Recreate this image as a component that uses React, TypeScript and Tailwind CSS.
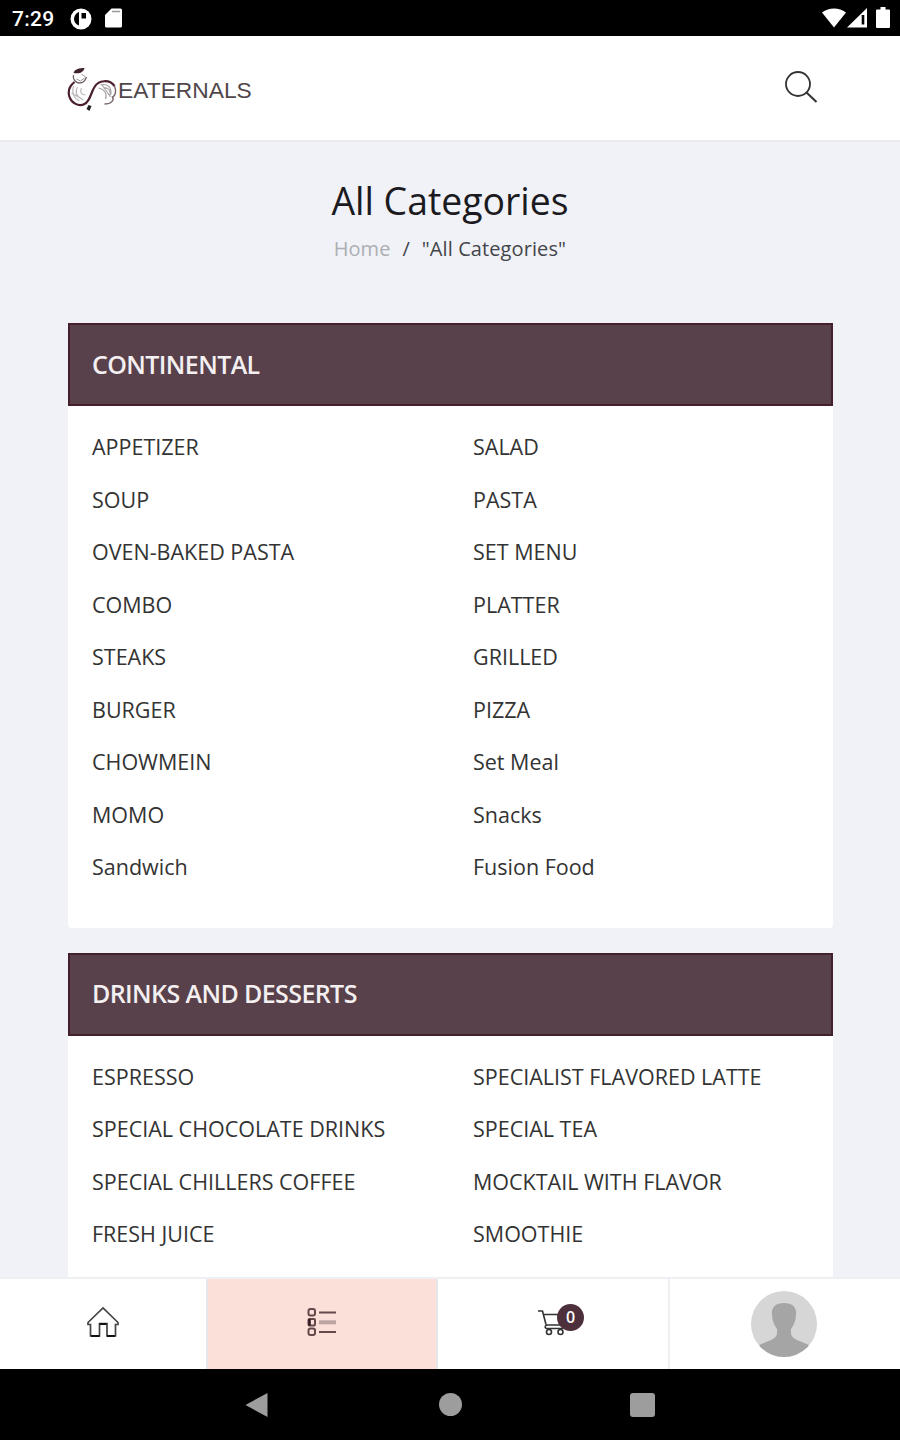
const categories = [
    {
        title: "CONTINENTAL",
        items: [
            "APPETIZER", "SALAD",
            "SOUP", "PASTA",
            "OVEN-BAKED PASTA", "SET MENU",
            "COMBO", "PLATTER",
            "STEAKS", "GRILLED",
            "BURGER", "PIZZA",
            "CHOWMEIN", "Set Meal",
            "MOMO", "Snacks",
            "Sandwich", "Fusion Food",
        ],
    },
    {
        title: "DRINKS AND DESSERTS",
        items: [
            "ESPRESSO", "SPECIALIST FLAVORED LATTE",
            "SPECIAL CHOCOLATE DRINKS", "SPECIAL TEA",
            "SPECIAL CHILLERS COFFEE", "MOCKTAIL WITH FLAVOR",
            "FRESH JUICE", "SMOOTHIE",
        ],
    },
];

function StatusBar() {
    return (
        <div className="flex h-9 shrink-0 items-center justify-between bg-black pl-3 pr-[10px] text-white">
            <div className="flex items-center">
                <span className="w-[58px] pt-[3px] font-['Roboto'] text-[21px] font-medium leading-none tracking-[0.3px]">
                    7:29
                </span>
                <svg className="mt-px h-[22px] w-[22px]" viewBox="0 0 22 22">
                    <circle cx="11" cy="11" r="10.5" fill="#fff" />
                    <path d="M9 4v13.500c-3-1-5-3.500-5-6.500S6 5 9 4Z" fill="#000" />
                    <path d="M11.500 5h4.500v5.500h-4.500Z" fill="#000" />
                </svg>
                <svg className="ml-[13px] h-5 w-[17px]" viewBox="0 0 17 20">
                    <path d="M6.500.5H15.500a1.500 1.500 0 0 1 1.500 1.500V18a1.500 1.500 0 0 1-1.500 1.500H1.500A1.500 1.500 0 0 1 0 18V7Z" fill="#fff" />
                    <path d="M7 3.500h8" stroke="#999" strokeWidth="1.500" />
                </svg>
            </div>
            <div className="flex items-center">
                <svg className="h-5 w-6" viewBox="0 0 24 20">
                    <path d="M0 4.500C7-.8 17-.8 24 4.500L12 19.500Z" fill="#fff" />
                </svg>
                <svg className="ml-px h-5 w-5" viewBox="0 0 20 20">
                    <path d="M20 0V19.500H0Z" fill="#fff" />
                    <path d="M16 7v9.500" stroke="#000" strokeWidth="2.600" />
                </svg>
                <svg className="ml-[9px] h-[22px] w-[14px]" viewBox="0 0 14 22">
                    <path d="M4.500 0h5v2.500H13a1 1 0 0 1 1 1V20a1 1 0 0 1-1 1H1a1 1 0 0 1-1-1V3.500a1 1 0 0 1 1-1h3.500Z" fill="#fff" />
                </svg>
            </div>
        </div>
    );
}

function Header() {
    return (
        <header className="flex h-[106px] shrink-0 items-center justify-between border-b-2 border-[#e9eaee] bg-white pl-[67px] pr-[82px]">
            <div className="flex items-center pt-[3px]">
                <svg className="h-[46px] w-[51px]" viewBox="0 0 50 46" fill="none">
                    <path d="M7 15C2 19 0 24 2 30c2 6 9 10 15 7 6-3 6-11 10-17 4-7 15-8 20-1" stroke="#4a1f30" strokeWidth="2.200" />
                    <path d="M6 6c1-4 6-5 11-5-1 4-4 6-11 5Z" fill="#40232c" />
                    <path d="M6 8c-1 4 2 8 6 8 4 0 6-3 7-6" stroke="#6f6267" strokeWidth="1.300" />
                    <path d="M9 12l4 2 4-3M14 7l4 3" stroke="#9b9497" />
                    <path d="M6 19c-2 7 0 12 6 15M10 20c-3 5-1 9 4 12M14 21c-2 4 0 7 4 7M4 26l12 7" stroke="#bdb9bb" strokeWidth="1.200" />
                    <path d="M33 18c7-2 12 3 10 10M36 21c5-1 8 3 6 8M31 21c6 1 9 6 7 11M34 17l9 13" stroke="#aaa4a7" strokeWidth="1.200" />
                    <path d="M47 19c2 5 1 10-2 11 2 3-1 7-8 7" stroke="#79656d" strokeWidth="1.400" />
                    <path d="M21 38l3 1-2 5-3-2Z" fill="#222" />
                </svg>
                <span className="origin-left scale-x-[1.060] pt-1 font-['Liberation_Sans'] text-[21.500px] leading-none text-[#51474b]">
                    EATERNALS
                </span>
            </div>
            <svg className="mt-[-3px] h-[34px] w-[34px]" viewBox="0 0 34 34" fill="none" stroke="#333" strokeWidth="1.800">
                <circle cx="14" cy="14" r="12" />
                <path d="M22.500 22.500l10 9.500" strokeWidth="2.100" />
            </svg>
        </header>
    );
}

function CategoryCard({ title, items }: { title: string; items: string[] }) {
    return (
        <section className="mb-[25px] rounded-b bg-white pb-[34px]">
            <h2 className="flex h-[83px] items-center border-2 border-[#43202c] bg-[#58414a] px-[22.500px] text-[25px] font-semibold tracking-[-0.600px] text-[#f4eff1]">
                {title}
            </h2>
            <ul className="grid grid-cols-[381px_1fr] pl-[24.500px] pt-[15px] text-[21.500px]">
                {items.map((item) => (
                    <li
                        key={item}
                        className="flex h-[52.500px] items-center whitespace-nowrap text-[#333]"
                    >
                        {item}
                    </li>
                ))}
            </ul>
        </section>
    );
}

function BottomNav() {
    return (
        <nav className="flex h-[92px] shrink-0 border-t-2 border-[#eef0f3] bg-white">
            <a className="flex w-[206px] items-center justify-center pb-1">
                <svg className="h-8 w-8" viewBox="0 0 32 32" fill="none" stroke="#444" strokeWidth="1.700">
                    <path d="M1 16.500 16 2l15 14.500v2h-2.500V30H20V17.500h-7.500V30H3.500V18.500H1Z" />
                    <path d="M12.500 18h7M4 30h8.500M20 30h8" stroke="#111" strokeWidth="2" />
                </svg>
            </a>
            <a className="flex w-[232px] items-center justify-center border-x-2 border-[#e5e7eb] bg-[#fbe0da] pb-[4px]">
                <svg className="h-[30px] w-[30px]" viewBox="0 0 30 30" fill="none" stroke="#63494b" strokeWidth="2">
                    <rect x="1.500" y="2" width="6.500" height="6.500" rx="2" />
                    <rect x="1.500" y="12" width="6.500" height="6.500" rx="1" />
                    <rect x="1.500" y="21.500" width="6.500" height="6.500" rx="2" />
                    <path d="M12 5.500h17M12 25h17" />
                    <path d="M12 15.300h17" stroke="#bca4a2" strokeWidth="4" />
                    <path d="M2.500 12v6.500" stroke="#30191f" strokeWidth="2.500" />
                </svg>
            </a>
            <a className="flex w-[230px] items-center justify-center pb-[3px]">
                <span className="relative h-[30px] w-[30px]">
                    <svg className="h-[30px] w-[30px]" viewBox="0 0 30 30" fill="none" stroke="#333" strokeWidth="1.600">
                        <path d="M0 3h4.500L8 16.500M6 6.500h22l-3 10.500H9c-3 1-2 3.500 0 3.500h16" />
                        <circle cx="11" cy="24" r="2.500" />
                        <circle cx="22.500" cy="24" r="2.500" />
                    </svg>
                    <span className="absolute -top-[4px] left-[19px] flex h-[27px] w-[27px] items-center justify-center rounded-full bg-[#4e303c] text-[16px] font-semibold leading-none text-white">
                        0
                    </span>
                </span>
            </a>
            <a className="flex flex-1 items-center justify-center border-l-2 border-[#eef0f3] pr-[2px]">
                <svg className="h-[66px] w-[66px]" viewBox="0 0 66 66">
                    <defs>
                        <clipPath id="avatar">
                            <circle cx="33" cy="33" r="33" />
                        </clipPath>
                    </defs>
                    <g clipPath="url(#avatar)">
                        <path d="M0 0h66v66H0Z" fill="#d6d6d6" />
                        <path d="M33 12c9 0 13 5 12 12-.5 6-2 10-5 14v5c2 7 12 7 19 12v11H7V55c7-5 17-5 19-12v-5c-3-4-4.500-8-5-14-1-7 3-12 12-12Z" fill="#a5a5a5" />
                    </g>
                </svg>
            </a>
        </nav>
    );
}

function SystemBar() {
    return (
        <div className="flex h-[71px] shrink-0 items-center justify-center bg-black">
            <div className="flex w-[410px] items-center justify-between">
                <svg className="h-[26px] w-[23px]" viewBox="0 0 23 26">
                    <path d="M22.500 1v24L.5 13Z" fill="#9d9d9d" />
                </svg>
                <span className="ml-[2px] h-[23px] w-[23px] rounded-full bg-[#9d9d9d]" />
                <span className="h-6 w-[25px] rounded-[3px] bg-[#9d9d9d]" />
            </div>
        </div>
    );
}

export default function App() {
    return (
        <div className="flex h-[1440px] w-[900px] flex-col overflow-hidden bg-[#f0f2f7] font-['Open_Sans',sans-serif]">
            <StatusBar />
            <Header />
            <main className="min-h-0 flex-1 overflow-hidden px-[67.500px]">
                <div className="flex h-[181px] flex-col items-center pt-[32.500px]">
                    <h1 className="text-[37.400px] leading-[52px] text-[#1b1b1f]">
                        All Categories
                    </h1>
                    <p className="mt-[8.500px] flex whitespace-pre text-[20px] leading-[28px] text-[#44454a]">
                        <span className="text-[#adaeb3]">Home</span>
                        <span className="px-3">/</span>
                        <span className="tracking-[0.100px]">"All Categories"</span>
                    </p>
                </div>
                {categories.map((category) => (
                    <CategoryCard
                        key={category.title}
                        title={category.title}
                        items={category.items}
                    />
                ))}
            </main>
            <BottomNav />
            <SystemBar />
        </div>
    );
}
